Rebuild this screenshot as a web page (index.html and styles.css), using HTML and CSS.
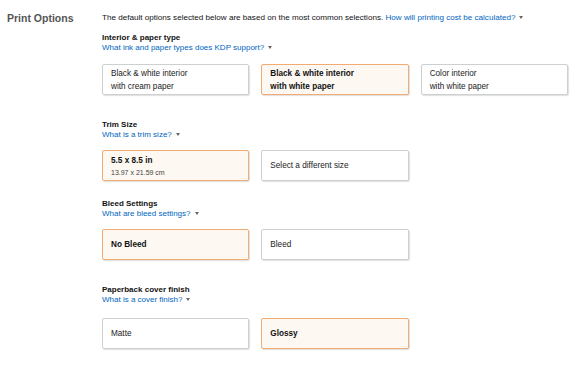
FILE: index.html
```html
<!DOCTYPE html>
<html lang="en">
<head>
<meta charset="utf-8">
<title>Print Options</title>
<link rel="stylesheet" href="styles.css">
</head>
<body>
<div class="page">
  <h2 class="title">Print Options</h2>
  <div class="main">
    <p class="intro">The default options selected below are based on the most common selections. <a href="#">How will printing cost be calculated?</a><span class="caret"></span></p>

    <section class="group g-interior">
      <div class="label">Interior &amp; paper type</div>
      <div class="help"><a href="#">What ink and paper types does KDP support?</a><span class="caret"></span></div>
      <div class="options three">
        <div class="card"><span>Black &amp; white interior</span><span>with cream paper</span></div>
        <div class="card selected"><span>Black &amp; white interior</span><span>with white paper</span></div>
        <div class="card"><span>Color interior</span><span>with white paper</span></div>
      </div>
    </section>

    <section class="group g-trim">
      <div class="label">Trim Size</div>
      <div class="help"><a href="#">What is a trim size?</a><span class="caret"></span></div>
      <div class="options three">
        <div class="card selected"><span>5.5 x 8.5 in</span><span class="sub">13.97 x 21.59 cm</span></div>
        <div class="card"><span>Select a different size</span></div>
      </div>
    </section>

    <section class="group g-bleed">
      <div class="label">Bleed Settings</div>
      <div class="help"><a href="#">What are bleed settings?</a><span class="caret"></span></div>
      <div class="options three">
        <div class="card selected"><span>No Bleed</span></div>
        <div class="card"><span>Bleed</span></div>
      </div>
    </section>

    <section class="group g-cover">
      <div class="label">Paperback cover finish</div>
      <div class="help"><a href="#">What is a cover finish?</a><span class="caret"></span></div>
      <div class="options three">
        <div class="card"><span>Matte</span></div>
        <div class="card selected"><span>Glossy</span></div>
      </div>
    </section>
  </div>
</div>
</body>
</html>
```

FILE: styles.css
```css
* { box-sizing: border-box; }
html, body { margin: 0; padding: 0; background: #fff; }
body {
  font-family: "Liberation Sans", Arial, sans-serif;
  color: #111;
  width: 580px;
  height: 367px;
  overflow: hidden;
}
.page {
  display: flex;
  padding-top: 12px;
}
.title {
  margin: 0;
  width: 102px;
  flex: none;
  padding-left: 7px;
  font-size: 10.5px;
  line-height: 12px;
  font-weight: bold;
  color: #555;
}
.main {
  width: 466px;
  flex: none;
}
.intro {
  margin: 0;
  font-size: 8.1px;
  line-height: 12px;
  white-space: nowrap;
}
a {
  color: #0066c0;
  text-decoration: none;
}
.caret {
  display: inline-block;
  width: 0;
  height: 0;
  margin-left: 4px;
  vertical-align: 1px;
  border-left: 2.5px solid transparent;
  border-right: 2.5px solid transparent;
  border-top: 3px solid #666;
}
.label {
  font-size: 8px;
  line-height: 10px;
  font-weight: bold;
}
.help {
  font-size: 8px;
  line-height: 10px;
}
.options {
  display: grid;
  grid-template-columns: repeat(3, 1fr);
  column-gap: 12px;
}
.card {
  height: 31px;
  display: flex;
  flex-direction: column;
  justify-content: center;
  padding: 0 8px;
  border: 1px solid #cdd0d0;
  border-radius: 2px;
  box-shadow: 1px 1px 1px rgba(0, 0, 0, 0.13);
  background: #fff;
  font-size: 8.2px;
  line-height: 13px;
  color: #222;
}
.card.selected {
  border-color: #f2ab72;
  background: #fdf8f2;
  font-weight: bold;
  color: #111;
}
.card .sub {
  font-weight: normal;
  font-size: 7px;
  line-height: 11px;
  color: #444;
}

.g-interior { margin-top: 9px; }
.g-interior .options { margin-top: 11px; }
.g-trim { margin-top: 25px; }
.g-trim .options { margin-top: 10px; }
.g-bleed { margin-top: 18px; }
.g-bleed .options { margin-top: 10px; }
.g-cover { margin-top: 25px; }
.g-cover .options { margin-top: 13px; }
```
